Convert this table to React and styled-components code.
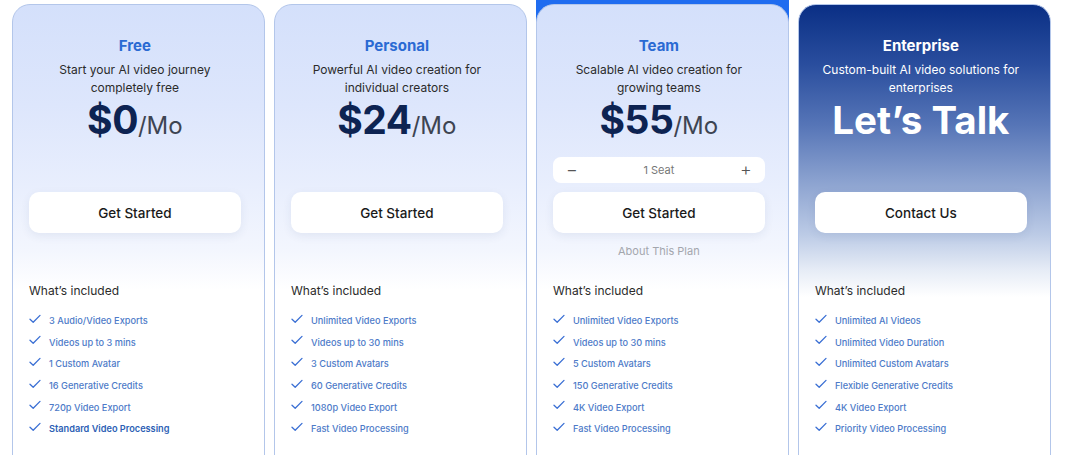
import React from "react";
import styled, { createGlobalStyle, css } from "styled-components";

const Global = createGlobalStyle`
  html, body { margin: 0; padding: 0; background: #ffffff; overflow: hidden; }
  body { font-family: Inter, "Noto Sans", Arial, sans-serif; -webkit-font-smoothing: antialiased; }
  * { box-sizing: border-box; }
`;

const Page = styled.div`
  display: grid;
  grid-template-columns: repeat(4, 252.8px);
  column-gap: 9.2px;
  padding: 0 0 0 12px;
  height: 455px;
  overflow: hidden;
  align-items: start;
`;

const Column = styled.div`
  padding-top: 4px;
  ${(p) =>
    p.$featured &&
    css`
      background: #1f6cf0;
    `}
`;

const Card = styled.div`
  height: 470px;
  border: 1px solid #b3c6ea;
  border-radius: 18px;
  padding: 31px 23px 0 16px;
  display: flex;
  flex-direction: column;
  background: ${(p) =>
    p.$dark
      ? "linear-gradient(180deg, #0a2f85 0px, #2a4e9e 60px, #5675b7 120px, #8aa1cf 175px, #bccbe6 230px, #e6ecf6 265px, #ffffff 292px)"
      : "linear-gradient(180deg, #d4e0fb 0px, #dde6fc 100px, #e8eefd 180px, #f3f6fe 245px, #ffffff 285px)"};
`;

const Header = styled.div`
  height: 110px;
  display: flex;
  flex-direction: column;
  align-items: center;
  text-align: center;
`;

const Title = styled.div`
  font-size: 15px;
  font-weight: 700;
  line-height: 20px;
  color: ${(p) => (p.$dark ? "#ffffff" : "#2a6ad3")};
`;

const Desc = styled.div`
  margin-top: 5px;
  font-size: 12px;
  line-height: 18px;
  color: ${(p) => (p.$dark ? "#ffffff" : "#2b2b2b")};
  max-width: 200px;
`;

const Price = styled.div`
  margin-top: 1px;
  display: flex;
  align-items: baseline;
  justify-content: center;
  line-height: 44px;
`;

const Amount = styled.span`
  font-size: ${(p) => (p.$big ? "38.5px" : "39px")};
  font-weight: 700;
  letter-spacing: ${(p) => (p.$big ? "0" : "-0.5px")};
  color: ${(p) => (p.$dark ? "#ffffff" : "#0d2352")};
`;

const Per = styled.span`
  font-size: 24px;
  font-weight: 400;
  color: #3d4452;
`;

const Actions = styled.div`
  height: 112px;
  padding-top: 11px;
  display: flex;
  flex-direction: column;
  align-items: stretch;
`;

const SeatBox = styled.div`
  height: 26px;
  border-radius: 8px;
  background: #ffffff;
  display: flex;
  align-items: center;
  justify-content: space-between;
  padding: 0 13px;
  visibility: ${(p) => (p.$show ? "visible" : "hidden")};
`;

const SeatBtn = styled.span`
  font-size: 18px;
  line-height: 18px;
  color: #555;
  font-weight: 300;
`;

const SeatLabel = styled.span`
  font-size: 11px;
  color: #777;
`;

const Button = styled.button`
  margin-top: 9px;
  height: 41px;
  border: none;
  border-radius: 10px;
  background: #ffffff;
  box-shadow: 0 3px 10px rgba(40, 60, 110, 0.08);
  font-family: inherit;
  font-size: 13.5px;
  font-weight: 500;
  color: #1a1a1a;
  cursor: pointer;
`;

const About = styled.div`
  margin-top: 11px;
  font-size: 11px;
  line-height: 14px;
  text-align: center;
  color: #a3a6ad;
  visibility: ${(p) => (p.$show ? "visible" : "hidden")};
`;

const Included = styled.div`
  margin-top: 24px;
  font-size: 12px;
  line-height: 18px;
  color: #2b2b2b;
`;

const List = styled.ul`
  list-style: none;
  margin: 10px 0 0;
  padding: 0;
`;

const Item = styled.li`
  display: flex;
  align-items: center;
  gap: 8px;
  height: 21.6px;
  font-size: 9.2px;
  font-weight: ${(p) => (p.$strong ? 600 : 500)};
  color: ${(p) => (p.$strong ? "#2d5fb5" : "#4d7ac8")};
`;

const Check = () => (
  <svg width="12" height="10" viewBox="0 0 12 10" style={{ marginTop: "-4px", flex: "none" }}>
    <path d="M1 5.2 L4.2 8.2 L11 1.4" fill="none" stroke="#3a6fd4" strokeWidth="1.3" strokeLinecap="round" strokeLinejoin="round" />
  </svg>
);

const plans = [
  {
    name: "Free",
    desc: "Start your AI video journey completely free",
    price: "$0",
    cta: "Get Started",
    features: ["3 Audio/Video Exports", "Videos up to 3 mins", "1 Custom Avatar", "16 Generative Credits", "720p Video Export", "Standard Video Processing"],
    strongLast: true,
  },
  {
    name: "Personal",
    desc: "Powerful AI video creation for individual creators",
    price: "$24",
    cta: "Get Started",
    features: ["Unlimited Video Exports", "Videos up to 30 mins", "3 Custom Avatars", "60 Generative Credits", "1080p Video Export", "Fast Video Processing"],
  },
  {
    name: "Team",
    desc: "Scalable AI video creation for growing teams",
    price: "$55",
    cta: "Get Started",
    team: true,
    features: ["Unlimited Video Exports", "Videos up to 30 mins", "5 Custom Avatars", "150 Generative Credits", "4K Video Export", "Fast Video Processing"],
  },
  {
    name: "Enterprise",
    desc: "Custom-built AI video solutions for enterprises",
    price: "Let\u2019s Talk",
    cta: "Contact Us",
    dark: true,
    features: ["Unlimited AI Videos", "Unlimited Video Duration", "Unlimited Custom Avatars", "Flexible Generative Credits", "4K Video Export", "Priority Video Processing"],
  },
];

export default function App() {
  return (
    <>
      <Global />
      <Page>
        {plans.map((p) => (
          <Column key={p.name} $featured={p.team}>
            <Card $dark={p.dark}>
              <Header>
                <Title $dark={p.dark}>{p.name}</Title>
                <Desc $dark={p.dark}>{p.desc}</Desc>
                <Price>
                  <Amount $dark={p.dark} $big={p.dark}>{p.price}</Amount>
                  {!p.dark && <Per>/Mo</Per>}
                </Price>
              </Header>
              <Actions>
                <SeatBox $show={p.team}>
                  <SeatBtn>−</SeatBtn>
                  <SeatLabel>1 Seat</SeatLabel>
                  <SeatBtn>+</SeatBtn>
                </SeatBox>
                <Button>{p.cta}</Button>
                <About $show={p.team}>About This Plan</About>
              </Actions>
              <Included>What’s included</Included>
              <List>
                {p.features.map((f, i) => (
                  <Item key={f} $strong={p.strongLast && i === p.features.length - 1}>
                    <Check />
                    {f}
                  </Item>
                ))}
              </List>
            </Card>
          </Column>
        ))}
      </Page>
    </>
  );
}
